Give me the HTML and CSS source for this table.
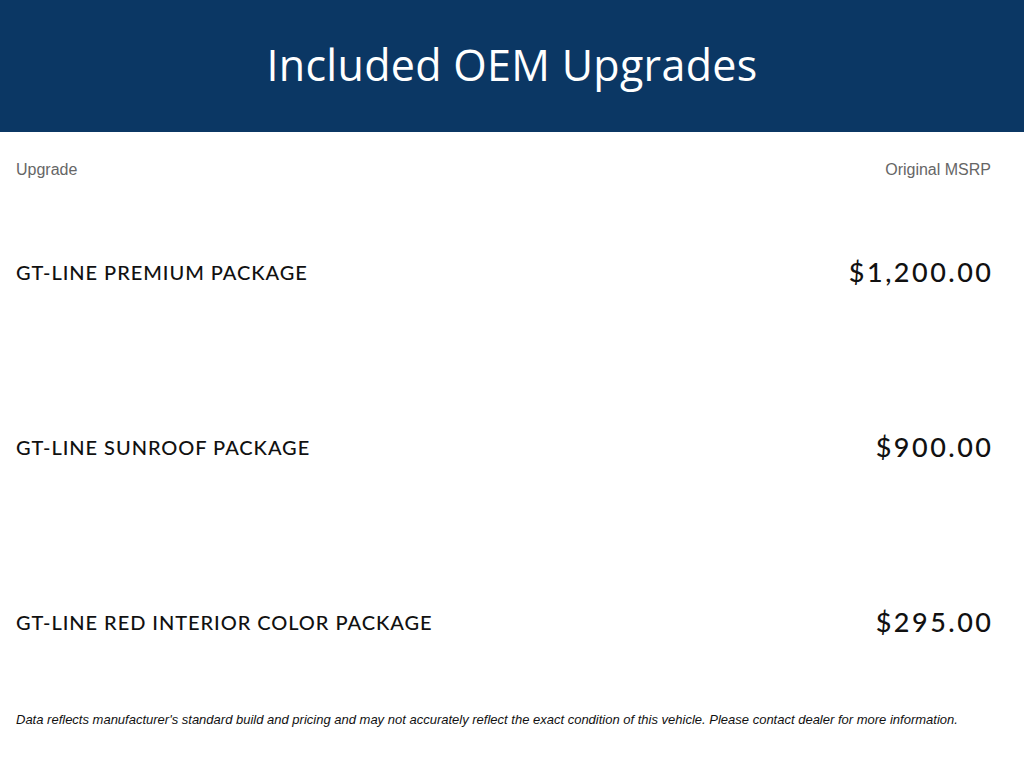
FILE: index.html
```html
<!DOCTYPE html>
<html lang="en">
<head>
<meta charset="utf-8">
<title>Included OEM Upgrades</title>
<link rel="stylesheet" href="styles.css">
</head>
<body>
  <header class="banner">
    <h1 class="banner-title">Included OEM Upgrades</h1>
  </header>
  <main class="upgrades">
    <div class="col-heads">
      <span>Upgrade</span>
      <span>Original MSRP</span>
    </div>
    <div class="row">
      <span class="name">GT-LINE PREMIUM PACKAGE</span>
      <span class="price">$1,200.00</span>
    </div>
    <div class="row">
      <span class="name">GT-LINE SUNROOF PACKAGE</span>
      <span class="price">$900.00</span>
    </div>
    <div class="row">
      <span class="name">GT-LINE RED INTERIOR COLOR PACKAGE</span>
      <span class="price">$295.00</span>
    </div>
    <p class="note">Data reflects manufacturer's standard build and pricing and may not accurately reflect the exact condition of this vehicle. Please contact dealer for more information.</p>
  </main>
</body>
</html>
```
FILE: styles.css
```css
* { box-sizing: border-box; }
html, body { margin: 0; padding: 0; background: #fff; }
body { font-family: "Liberation Sans", Arial, sans-serif; color: #111; }

.banner {
  height: 132px;
  background: #0b3764;
  display: flex;
  align-items: center;
  justify-content: center;
  padding-bottom: 4px;
}
.banner-title {
  margin: 0;
  color: #fff;
  font-family: "Open Sans", sans-serif;
  font-weight: 400;
  font-size: 43px;
  letter-spacing: 0.3px;
  line-height: 1;
}

.upgrades { padding: 0 33px 0 16px; }

.col-heads {
  display: flex;
  justify-content: space-between;
  padding-top: 28px;
  padding-bottom: 4px;
  height: 52px;
  font-size: 16px;
  line-height: 20px;
  color: #666;
}

.row {
  height: 175px;
  display: flex;
  align-items: center;
  justify-content: space-between;
}
.name {
  font-family: "Lato", sans-serif;
  font-size: 20px;
  font-weight: 500;
  letter-spacing: 0.95px;
  color: #111;
}
.price {
  font-family: "Lato", sans-serif;
  font-size: 27px;
  font-weight: 500;
  letter-spacing: 2.5px;
  margin-right: -2.5px;
  color: #111;
}

.note {
  margin: 3px 0 0;
  font-style: italic;
  font-size: 13px;
  line-height: 16px;
  color: #111;
}
```
